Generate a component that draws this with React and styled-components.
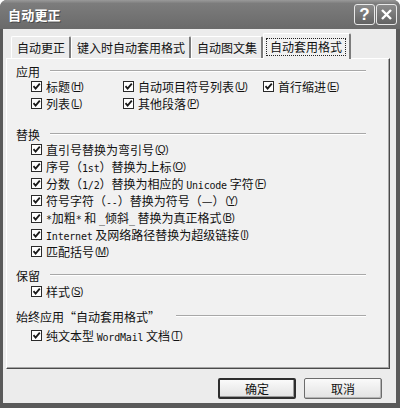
import React from 'react';
import styled, { createGlobalStyle } from 'styled-components';

const GlobalStyle = createGlobalStyle`
  html, body {
    margin: 0;
    padding: 0;
    background: #ffffff;
  }
  body {
    font-family: "Noto Sans CJK SC", "Liberation Sans", sans-serif;
  }
`;

const Frame = styled.div`
  width: 400px;
  height: 408px;
  display: flex;
  flex-direction: column;
  background: #5a5a5a;
  border-radius: 7px 7px 0 0;
  overflow: hidden;
  box-sizing: border-box;
`;

const TitleBar = styled.div`
  height: 29px;
  flex: none;
  display: flex;
  align-items: center;
  padding: 0 3px 0 8px;
  background: linear-gradient(#9a9a9a 0%, #7c7c7c 12%, #727272 60%, #6a6a6a 100%);
`;

const Title = styled.div`
  flex: 1;
  color: #ffffff;
  font-size: 13px;
  font-weight: 700;
  letter-spacing: 0.2px;
  text-shadow: 1px 1px 0 #4a4a4a;
`;

const TitleButton = styled.div`
  width: 21px;
  height: 21px;
  box-sizing: border-box;
  margin-left: 1px;
  border: 1px solid #e8e8e8;
  border-radius: 3px;
  background: linear-gradient(#8c8c8c, #626262);
  display: flex;
  align-items: center;
  justify-content: center;
  color: #ffffff;
  font: 700 17px "Liberation Sans", sans-serif;
`;

const Client = styled.div`
  flex: 1;
  display: flex;
  flex-direction: column;
  background: #ececec;
  margin: 0 4px 5px 3px;
  padding: 0 6px 0 3px;
  min-height: 0;
`;

const TabRow = styled.div`
  height: 29px;
  padding: 0 0 0 5px;
  display: flex;
  align-items: flex-end;
  flex: none;
  position: relative;
  z-index: 1;
`;

const Tab = styled.div`
  height: ${p => (p.$active ? '26px' : '22px')};
  margin-bottom: ${p => (p.$active ? '-1px' : '0')};
  box-sizing: border-box;
  padding: ${p => (p.$active ? '0 3px 0 2px' : '0 4px 0 5px')};
  display: flex;
  align-items: center;
  font-size: 12px;
  color: #111;
  background: ${p => (p.$active ? '#f1f1f1' : '#ececec')};
  border-top: 1px solid #ffffff;
  border-left: 1px solid #ffffff;
  border-right: 2px solid #7c7c7c;
  border-radius: 2px 2px 0 0;
`;

const Focus = styled.span`
  padding: 0 3px;
  line-height: 16px;
  border: 1px dotted #222;
`;

const Panel = styled.div`
  flex: 1;
  background: #f1f1f1;
  border-top: 1px solid #ffffff;
  border-left: 1px solid #ffffff;
  border-right: 1px solid #4a4a4a;
  border-bottom: 1px solid #4a4a4a;
  box-shadow: inset -1px -1px 0 #a6a6a6;
  padding: 5px 23px 0 9px;
`;

const Group = styled.div`
  margin-top: ${p => p.$top || 0}px;
`;

const Header = styled.div`
  height: 14px;
  display: flex;
  align-items: center;
  font-size: 12px;
  color: #111;
`;

const Rule = styled.div`
  flex: 1;
  margin-left: ${p => p.$gap || 10}px;
  border-top: 1px solid #a8a8a8;
  border-bottom: 1px solid #ffffff;
`;

const Items = styled.div`
  padding-left: 15px;
  margin-top: ${p => p.$top || 0}px;
  display: ${p => (p.$grid ? 'grid' : 'block')};
  grid-template-columns: 92px 140px auto;
`;

const Row = styled.div`
  height: 17px;
  display: flex;
  align-items: center;
  font-size: 12px;
  color: #111;
  white-space: nowrap;
`;

const Box = styled.span`
  width: 11px;
  height: 11px;
  box-sizing: border-box;
  flex: none;
  margin-right: 4px;
  background: #ffffff;
  border: 1px solid #2a2a2a;
  display: flex;
  align-items: center;
  justify-content: center;
`;

const Mono = styled.span`
  font-family: "DejaVu Sans Mono", "Liberation Mono", monospace;
  font-size: 10px;
  letter-spacing: -0.2px;
`;

const Key = styled.span`
  font-family: "Liberation Sans", sans-serif;
  font-size: 10px;
  margin-left: 1px;
  letter-spacing: -0.5px;
`;

const ButtonRow = styled.div`
  flex: none;
  display: flex;
  justify-content: flex-end;
  gap: 8px;
  padding: 9px 8px 4px 0;
`;

const Button = styled.div`
  width: 78px;
  height: 21px;
  box-sizing: border-box;
  display: flex;
  align-items: center;
  justify-content: center;
  font-size: 12px;
  color: #111;
  border-radius: 2px;
  background: linear-gradient(#fafafa, #e2e2e2);
  border: ${p => (p.$default ? '2px solid #2e2e2e' : '1px solid #6c6c6c')};
  box-shadow: ${p => (p.$default ? 'inset -1px -1px 0 #9a9a9a' : 'inset -1px -1px 0 #b4b4b4')};
`;

const Check = () => (
  <Box>
    <svg width="9" height="9" viewBox="0 0 9 9">
      <path d="M1.5 4.2 L3.6 6.6 L7.8 1.6" fill="none" stroke="#1a1a1a" strokeWidth="1.8" />
    </svg>
  </Box>
);

const Item = ({ children, k }) => (
  <Row>
    <Check />
    <span>{children}</span>
    <Key>(<u>{k}</u>)</Key>
  </Row>
);

export default function App() {
  return (
    <>
      <GlobalStyle />
      <Frame>
        <TitleBar>
          <Title>自动更正</Title>
          <TitleButton>?</TitleButton>
          <TitleButton>
            <svg width="13" height="13" viewBox="0 0 13 13">
              <path d="M2 2 L11 11 M11 2 L2 11" stroke="#ffffff" strokeWidth="2.4" />
            </svg>
          </TitleButton>
        </TitleBar>
        <Client>
          <TabRow>
            <Tab>自动更正</Tab>
            <Tab>键入时自动套用格式</Tab>
            <Tab>自动图文集</Tab>
            <Tab $active><Focus>自动套用格式</Focus></Tab>
          </TabRow>
          <Panel>
            <Group>
              <Header>应用<Rule /></Header>
              <Items $grid>
                <Item k="H">标题</Item>
                <Item k="U">自动项目符号列表</Item>
                <Item k="E">首行缩进</Item>
                <Item k="L">列表</Item>
                <Item k="P">其他段落</Item>
              </Items>
            </Group>
            <Group $top={15}>
              <Header>替换<Rule /></Header>
              <Items>
                <Item k="Q">直引号替换为弯引号 </Item>
                <Item k="O">序号（<Mono>1st</Mono>）替换为上标 </Item>
                <Item k="F">分数（<Mono>1/2</Mono>）替换为相应的 <Mono>Unicode</Mono> 字符</Item>
                <Item k="Y">符号字符（<Mono>--</Mono>）替换为符号（—） </Item>
                <Item k="B"><Mono>*</Mono>加粗<Mono>*</Mono> 和 <Mono>_</Mono>倾斜<Mono>_</Mono> 替换为真正格式</Item>
                <Item k="I"><Mono>Internet</Mono> 及网络路径替换为超级链接</Item>
                <Item k="M">匹配括号</Item>
              </Items>
            </Group>
            <Group $top={8}>
              <Header>保留<Rule /></Header>
              <Items $top={1}>
                <Item k="S">样式</Item>
              </Items>
            </Group>
            <Group $top={9}>
              <Header>始终应用“自动套用格式”<Rule $gap={16} /></Header>
              <Items $top={4}>
                <Item k="T">纯文本型 <Mono>WordMail</Mono> 文档</Item>
              </Items>
            </Group>
          </Panel>
          <ButtonRow>
            <Button $default>确定</Button>
            <Button>取消</Button>
          </ButtonRow>
        </Client>
      </Frame>
    </>
  );
}
